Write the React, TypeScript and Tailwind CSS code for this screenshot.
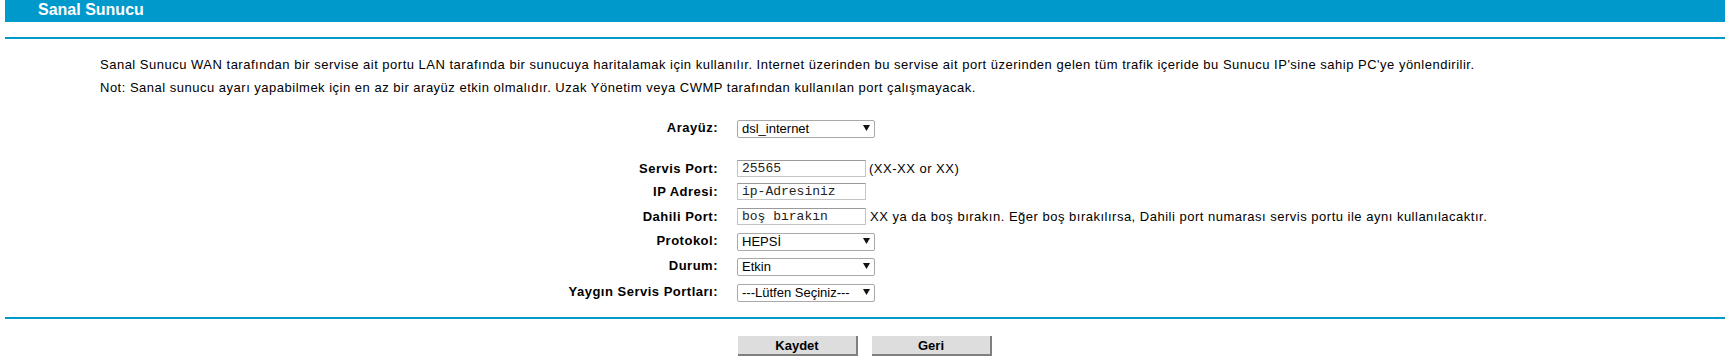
import React from "react";

function Arrow() {
  return (
    <svg width="7" height="6" viewBox="0 0 7 6" className="pointer-events-none absolute right-[5px] top-[6px]">
      <path d="M0 0 H7 L3.5 6 Z" fill="#111" />
    </svg>
  );
}

function SelectBox({ value, options }: { value: string; options: string[] }) {
  return (
    <div className="relative h-[18px] w-[138px]">
      <select defaultValue={value} className="h-full w-full appearance-none rounded-[2px] border border-[#a9a9a9] bg-white pl-[4px] text-[13px] leading-[16px] text-black outline-none">
        {options.map((o) => (
          <option key={o} value={o}>{o}</option>
        ))}
      </select>
      <Arrow />
    </div>
  );
}

function TextBox({ value }: { value: string }) {
  return (
    <input
      defaultValue={value}
      className="h-[17px] w-[129px] border border-[#c4c4c4] border-t-[#9a9a9a] bg-white pl-[4px] font-['Liberation_Mono','Courier_New',monospace] text-[13px] leading-[15px] text-[#222] outline-none"
    />
  );
}

function Row({ label, mt, h, children }: { label: string; mt: string; h: string; children: React.ReactNode }) {
  return (
    <div className={`flex items-center ${mt} ${h}`}>
      <div className="w-[318px] text-right font-bold tracking-[0.5px]">{label}</div>
      <div className="ml-[19px] flex items-center">{children}</div>
    </div>
  );
}

export default function App() {
  return (
    <div className="h-[361px] w-[1734px] overflow-hidden bg-white font-['Liberation_Sans',Arial,sans-serif] text-[13px] text-black">
      <div className="ml-[5px] w-[1720px]">
        <div className="h-[22px] bg-[#0099cc] pl-[33px] text-[16px] font-bold leading-[19px] text-white">Sanal Sunucu</div>
        <div className="mt-[15px] h-[2px] bg-[#0099cc]" />

        <div className="mt-[14px] pl-[95px] leading-[23px] tracking-[0.5px]">
          <p>Sanal Sunucu WAN tarafından bir servise ait portu LAN tarafında bir sunucuya haritalamak için kullanılır. Internet üzerinden bu servise ait port üzerinden gelen tüm trafik içeride bu Sunucu IP'sine sahip PC'ye yönlendirilir.</p>
          <p>Not: Sanal sunucu ayarı yapabilmek için en az bir arayüz etkin olmalıdır. Uzak Yönetim veya CWMP tarafından kullanılan port çalışmayacak.</p>
        </div>

        <div className="ml-[395px]">
          <Row label="Arayüz:" mt="mt-[20px]" h="h-[18px]">
            <SelectBox value="dsl_internet" options={["dsl_internet"]} />
          </Row>
          <Row label="Servis Port:" mt="mt-[23px]" h="h-[17px]">
            <TextBox value="25565" />
            <span className="ml-[3px] tracking-[0.5px]">(XX-XX or XX)</span>
          </Row>
          <Row label="IP Adresi:" mt="mt-[6px]" h="h-[17px]">
            <TextBox value="ip-Adresiniz" />
          </Row>
          <Row label="Dahili Port:" mt="mt-[8px]" h="h-[17px]">
            <TextBox value="boş bırakın" />
            <span className="ml-[4px] tracking-[0.5px]">XX ya da boş bırakın. Eğer boş bırakılırsa, Dahili port numarası servis portu ile aynı kullanılacaktır.</span>
          </Row>
          <Row label="Protokol:" mt="mt-[7px]" h="h-[18px]">
            <SelectBox value="HEPSİ" options={["HEPSİ", "TCP", "UDP"]} />
          </Row>
          <Row label="Durum:" mt="mt-[7px]" h="h-[18px]">
            <SelectBox value="Etkin" options={["Etkin", "Devre Dışı"]} />
          </Row>
          <Row label="Yaygın Servis Portları:" mt="mt-[8px]" h="h-[18px]">
            <SelectBox value="---Lütfen Seçiniz---" options={["---Lütfen Seçiniz---"]} />
          </Row>
        </div>

        <div className="mt-[16px] h-[2px] bg-[#0099cc]" />

        <div className="mt-[17px] flex justify-center gap-[14px]">
          <button className="h-[20px] w-[120px] border-r-2 border-b-2 border-[#7f7f7f] bg-[#dddddd] text-[13px] font-bold leading-none">Kaydet</button>
          <button className="h-[20px] w-[120px] border-r-2 border-b-2 border-[#7f7f7f] bg-[#dddddd] text-[13px] font-bold leading-none">Geri</button>
        </div>
      </div>
    </div>
  );
}
